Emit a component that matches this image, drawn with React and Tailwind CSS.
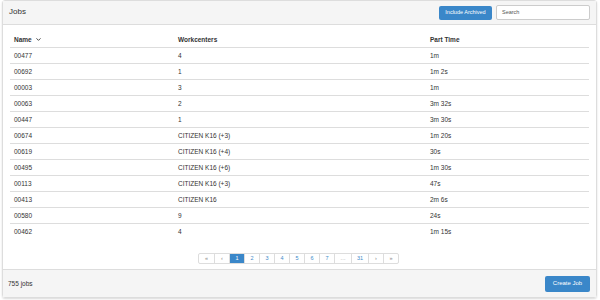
import { ChevronDown } from "lucide-react";

const JOBS = [
  ["00477", "4", "1m"],
  ["00692", "1", "1m 2s"],
  ["00003", "3", "1m"],
  ["00063", "2", "3m 32s"],
  ["00447", "1", "3m 30s"],
  ["00674", "CITIZEN K16 (+3)", "1m 20s"],
  ["00619", "CITIZEN K16 (+4)", "30s"],
  ["00495", "CITIZEN K16 (+6)", "1m 30s"],
  ["00113", "CITIZEN K16 (+3)", "47s"],
  ["00413", "CITIZEN K16", "2m 6s"],
  ["00580", "9", "24s"],
  ["00462", "4", "1m 15s"],
];

const PAGES = ["«", "‹", "1", "2", "3", "4", "5", "6", "7", "…", "31", "›", "»"];

export default function App() {
  return (
    <div
      className="w-[600px] h-[300px] bg-white text-[#333] overflow-hidden"
      style={{ fontFamily: '"Liberation Sans", Arial, sans-serif' }}
    >
      <div className="ml-[2px] w-[595px] h-[298px] border border-[#ddd] rounded-[3px] shadow-[0_1px_2px_rgba(0,0,0,0.15)] flex flex-col">
        {/* header */}
        <div className="h-[24px] bg-[#f5f5f5] border-b border-[#ddd] flex items-center justify-between pl-[6px] pr-[6px]">
          <span className="text-[8px] -mt-[2px]">Jobs</span>
          <div className="flex items-center gap-[4px]">
            <button className="h-[14px] w-[53px] bg-[#3a87c9] rounded-[2px] text-white text-[5.5px]">
              Include Archived
            </button>
            <div className="h-[15px] w-[94px] border border-[#ccc] rounded-[2px] bg-white text-[5.5px] text-[#555] flex items-center pl-[5px]">
              Search
            </div>
          </div>
        </div>

        {/* table */}
        <div className="flex-1 px-[7px] pt-[7px]">
          <div className="grid grid-cols-[164px_252px_1fr] h-[16px] items-center border-b border-[#ddd] text-[6.5px] font-bold">
            <div className="pl-[4px] flex items-center gap-[3px]">
              Name <ChevronDown size={7} strokeWidth={3} />
            </div>
            <div className="pl-[4px]">Workcenters</div>
            <div className="pl-[4px]">Part Time</div>
          </div>
          {JOBS.map(([name, wc, time], i) => (
            <div
              key={name}
              className={`grid grid-cols-[164px_252px_1fr] h-[16px] items-center text-[6.5px] ${
                i < JOBS.length - 1 ? "border-b border-[#ddd]" : ""
              }`}
            >
              <div className="pl-[4px]">{name}</div>
              <div className="pl-[4px]">{wc}</div>
              <div className="pl-[4px]">{time}</div>
            </div>
          ))}

          <div className="flex justify-center mt-[13px] -ml-[2px]">
            <div className="flex h-[11px] border border-[#ddd] rounded-[2px] text-[5.5px]">
              {PAGES.map((p, i) => (
                <div
                  key={i}
                  className={`flex items-center justify-center ${
                    p === "…" || p === "31" ? "w-[17px]" : "w-[15px]"
                  } ${i > 0 ? "border-l border-[#ddd]" : ""} ${
                    p === "1" ? "bg-[#3a87c9] text-white" : i < 2 || i > 10 || p === "…" ? "text-[#888]" : "text-[#428bca]"
                  }`}
                >
                  {p}
                </div>
              ))}
            </div>
          </div>
        </div>

        {/* footer */}
        <div className="h-[28px] bg-[#f5f5f5] border-t border-[#ddd] flex items-center justify-between pl-[5px] pr-[6px]">
          <span className="text-[6.5px]">755 jobs</span>
          <button className="h-[16px] w-[45px] bg-[#3a87c9] rounded-[2px] text-white text-[6px]">
            Create Job
          </button>
        </div>
      </div>
    </div>
  );
}
